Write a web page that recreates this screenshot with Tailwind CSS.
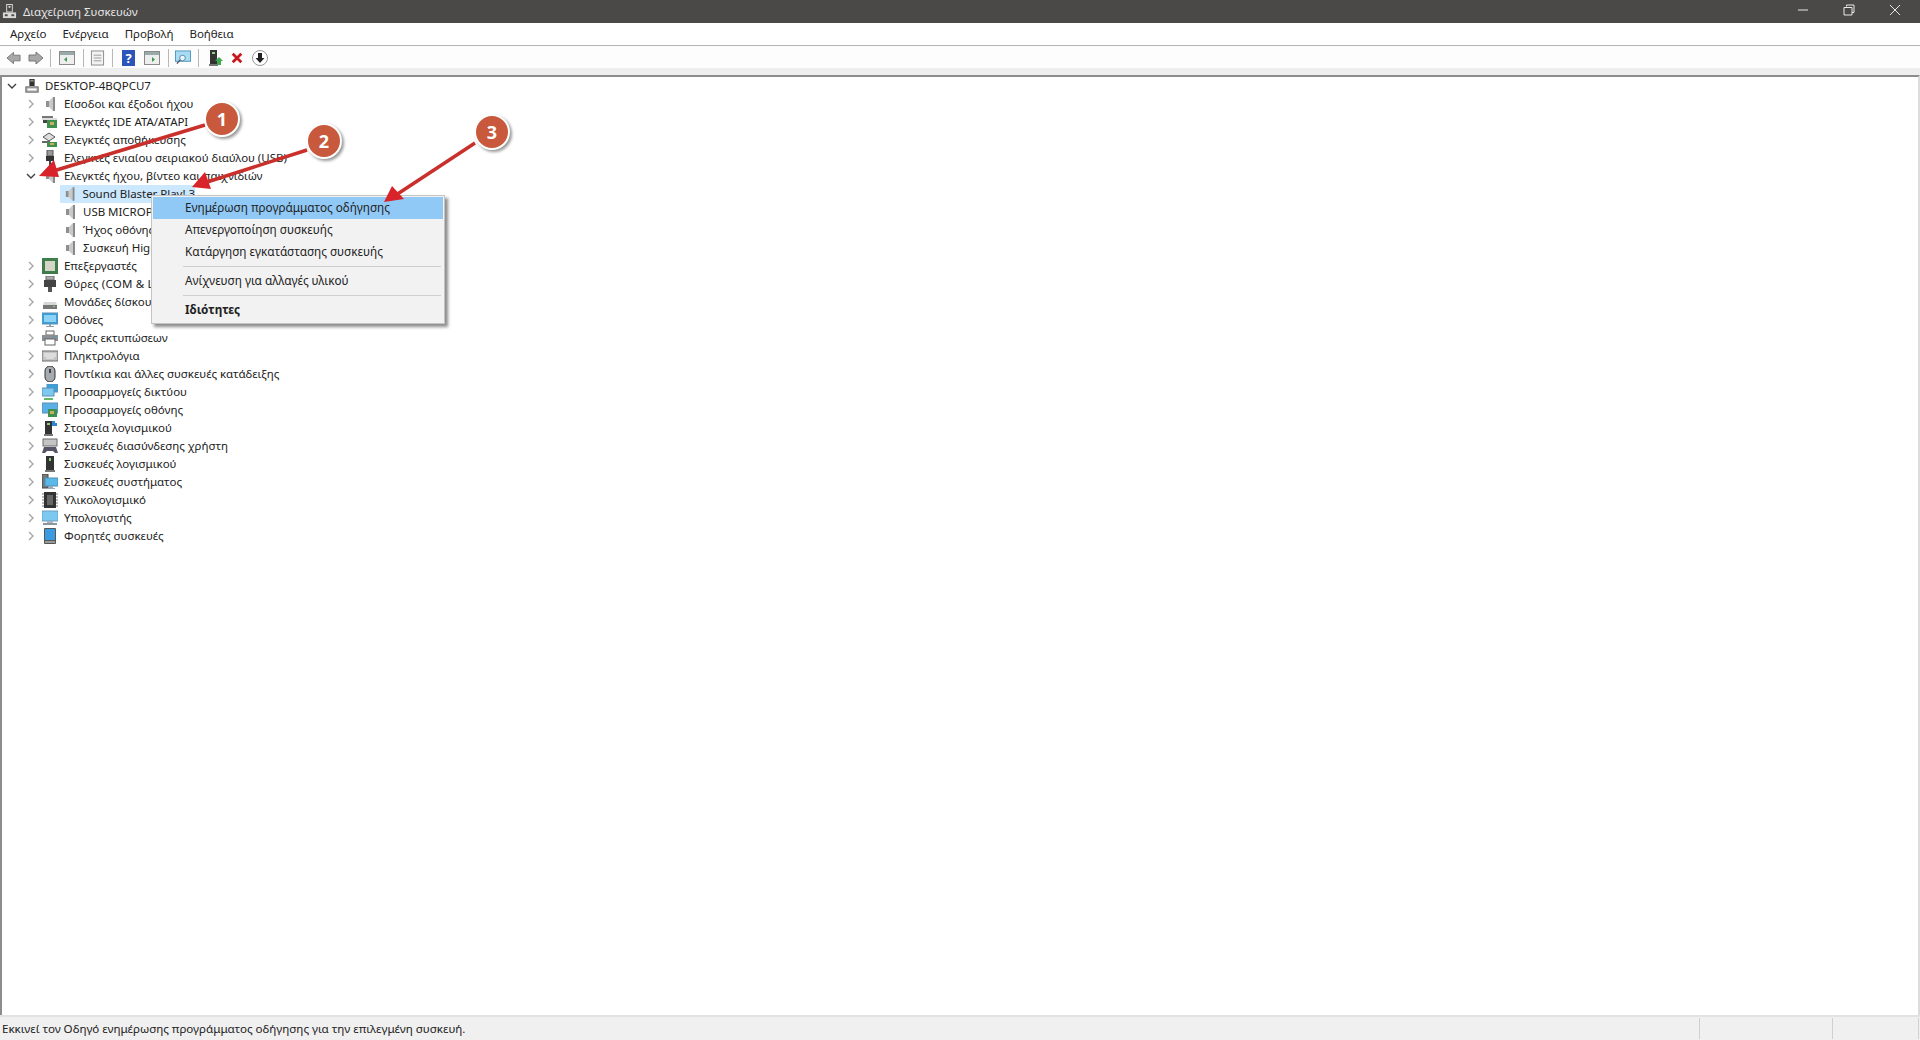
<!DOCTYPE html>
<html lang="el">
<head>
<meta charset="utf-8">
<title>Διαχείριση Συσκευών</title>
<script src="https://cdn.jsdelivr.net/npm/@tailwindcss/browser@4"></script>
</head>
<body class="overflow-hidden bg-white">
<!-- icon sprites -->
<svg class="hidden">
  <symbol id="root" viewBox="0 0 16 16"><rect x="5" y="0" width="6" height="8" fill="#333"/><rect x="6" y="1" width="4" height="2" fill="#888"/><rect x="1" y="9" width="14" height="6" fill="#b5b5b5" stroke="#555"/><rect x="3" y="11" width="10" height="2" fill="#fff"/></symbol>
  <symbol id="title-icon" viewBox="0 0 16 16"><rect x="5" y="0.500" width="6" height="8" fill="none" stroke="#ddd"/><rect x="7" y="2" width="2" height="2" fill="#ddd"/><rect x="1" y="9" width="14" height="6" fill="#d8d8d8"/><rect x="3" y="11" width="3" height="2" fill="#4a4947"/><rect x="10" y="11" width="3" height="2" fill="#4a4947"/></symbol>
  <symbol id="speaker" viewBox="0 0 16 16"><path d="M4 5h3v6H4z" fill="#8f8f8f"/><path d="M7 5l4-4v14l-4-4z" fill="#c9c9c9"/><path d="M11 1h2v14h-2z" fill="#8a8a8a"/></symbol>
  <symbol id="ide" viewBox="0 0 16 16"><rect x="0" y="2" width="11" height="3" fill="#777"/><rect x="0" y="4" width="15" height="2" fill="#ddd"/><rect x="5" y="6" width="10" height="8" fill="#3f8f4f"/><rect x="8" y="8" width="4" height="3" fill="#c8b060"/><rect x="1" y="6" width="4" height="3" fill="#444"/></symbol>
  <symbol id="storage" viewBox="0 0 16 16"><path d="M1 5l6-4 6 4-6 4z" fill="#ddd" stroke="#555"/><rect x="0" y="9" width="8" height="2" fill="#666"/><rect x="5" y="10" width="10" height="5" fill="#3f8f4f"/><rect x="8" y="11" width="4" height="2" fill="#c8b060"/></symbol>
  <symbol id="usb" viewBox="0 0 16 16"><rect x="5" y="0" width="6" height="6" fill="#999" stroke="#555"/><rect x="4" y="6" width="8" height="5" fill="#333"/><rect x="7" y="11" width="2" height="5" fill="#444"/></symbol>
  <symbol id="cpu" viewBox="0 0 16 16"><rect x="0" y="0" width="16" height="16" fill="#3f7d4a"/><rect x="3" y="3" width="10" height="10" fill="#d6d6c6"/></symbol>
  <symbol id="port" viewBox="0 0 16 16"><rect x="4" y="0" width="8" height="4" fill="#aaa" stroke="#666"/><rect x="2" y="4" width="12" height="7" fill="#444"/><rect x="6" y="11" width="4" height="5" fill="#555"/></symbol>
  <symbol id="disk" viewBox="0 0 16 16"><path d="M2 8h12l1 3H1z" fill="#d8d8d8"/><rect x="1" y="11" width="14" height="4" fill="#777"/><rect x="11" y="12" width="2" height="1" fill="#7fd06f"/></symbol>
  <symbol id="monitor" viewBox="0 0 16 16"><rect x="0" y="1" width="16" height="11" fill="#3aa0dc" stroke="#5c8fb5"/><rect x="2" y="3" width="12" height="7" fill="#8ed2f5"/><rect x="7" y="12" width="2" height="2" fill="#8aa"/><rect x="4" y="14" width="8" height="1" fill="#99a"/></symbol>
  <symbol id="printer" viewBox="0 0 16 16"><rect x="4" y="1" width="8" height="4" fill="#fff" stroke="#666"/><rect x="0" y="5" width="16" height="6" fill="#8a8f94"/><rect x="3" y="9" width="10" height="6" fill="#fff" stroke="#666"/><rect x="12" y="6" width="2" height="1" fill="#38a0dc"/></symbol>
  <symbol id="keyboard" viewBox="0 0 16 16"><rect x="0" y="3" width="16" height="10" fill="#c4c4c4" stroke="#6c6c6c"/><path d="M2 6h12M2 8h12M4 10h8" stroke="#f4f4f4"/></symbol>
  <symbol id="mouse" viewBox="0 0 16 16"><rect x="3" y="0" width="10" height="16" rx="5" fill="#a5abb0" stroke="#333"/><rect x="7" y="3" width="2" height="4" fill="#444"/></symbol>
  <symbol id="network" viewBox="0 0 16 16"><rect x="5" y="0" width="11" height="8" fill="#3aa0dc" stroke="#5c8fb5"/><rect x="0" y="4" width="12" height="8" fill="#7cc8f0" stroke="#5c8fb5"/><rect x="2" y="14" width="9" height="2" fill="#5fb86a"/></symbol>
  <symbol id="adapter" viewBox="0 0 16 16"><rect x="0" y="1" width="16" height="10" fill="#5ab0e4" stroke="#5c8fb5"/><rect x="6" y="7" width="9" height="8" fill="#3f8f4f"/><rect x="8" y="9" width="4" height="3" fill="#c8b060"/></symbol>
  <symbol id="component" viewBox="0 0 16 16"><rect x="3" y="1" width="7" height="14" fill="#333"/><rect x="5" y="3" width="3" height="2" fill="#8fd07f"/><rect x="2" y="14" width="9" height="2" fill="#777"/><path d="M10 1h3v2h2v3h-5z" fill="#2f86d0"/></symbol>
  <symbol id="hid" viewBox="0 0 16 16"><rect x="1" y="1" width="14" height="7" fill="#c4c4c4" stroke="#6c6c6c"/><path d="M2 9h12l2 6h-3l-2-2H5l-2 2H0z" fill="#556"/></symbol>
  <symbol id="software" viewBox="0 0 16 16"><rect x="4" y="0" width="8" height="14" fill="#333"/><rect x="7" y="2" width="2" height="3" fill="#8fd07f"/><rect x="3" y="14" width="10" height="2" fill="#777"/></symbol>
  <symbol id="system" viewBox="0 0 16 16"><rect x="0" y="0" width="6" height="14" fill="#777" stroke="#444"/><rect x="3" y="4" width="13" height="8" fill="#5ab8ea" stroke="#4f8fb5"/><rect x="7" y="12" width="4" height="2" fill="#9ab"/><rect x="5" y="14" width="8" height="1" fill="#9ab"/></symbol>
  <symbol id="firmware" viewBox="0 0 16 16"><rect x="2" y="0" width="12" height="16" fill="#333"/><path d="M0 2h2M0 5h2M0 8h2M0 11h2M0 14h2M14 2h2M14 5h2M14 8h2M14 11h2M14 14h2" stroke="#777"/><rect x="5" y="3" width="6" height="10" fill="#666"/></symbol>
  <symbol id="computer" viewBox="0 0 16 16"><rect x="0" y="1" width="16" height="10" fill="#7cc8f0" stroke="#6a9fc0"/><rect x="5" y="11" width="6" height="2" fill="#a8b4bc"/><rect x="1" y="13" width="14" height="2" fill="#8a959c"/></symbol>
  <symbol id="tablet" viewBox="0 0 16 16"><rect x="2" y="0" width="12" height="16" rx="1" fill="#555"/><rect x="3" y="1" width="10" height="11" fill="#3a9be0"/><rect x="3" y="13" width="10" height="2" fill="#999"/></symbol>
  <symbol id="chev-r" viewBox="0 0 10 10"><path d="M3 1l4 4-4 4" fill="none" stroke="#a6a6a6" stroke-width="1.4"/></symbol>
  <symbol id="chev-d" viewBox="0 0 10 10"><path d="M1 3l4 4 4-4" fill="none" stroke="#404040" stroke-width="1.4"/></symbol>
</svg>

<div class="relative flex flex-col h-[1040px] w-[1920px] whitespace-nowrap text-[11.5px] tracking-[-0.03px] text-[#222] font-['Noto_Sans','Open_Sans',sans-serif]">
  <!-- title bar -->
  <div class="flex items-center h-[23px] bg-[#4a4947] text-[#e6e6e6]">
    <svg class="w-[15px] h-[15px] ml-[2px] mr-[6px]"><use href="#title-icon"/></svg>
    <span>Διαχείριση Συσκευών</span>
    <div class="ml-auto flex items-center gap-[34px] mr-[19px] pb-[3px]">
      <svg class="w-[12px] h-[12px]" viewBox="0 0 12 12"><path d="M1 6h10" stroke="#e8e8e8"/></svg>
      <svg class="w-[12px] h-[12px]" viewBox="0 0 12 12"><path d="M3.500 2.500v-1.500h7.500v7.500h-2M1 3.500h8v7.500h-8z" fill="none" stroke="#e8e8e8"/></svg>
      <svg class="w-[12px] h-[12px]" viewBox="0 0 12 12"><path d="M1 1l10 10M11 1l-10 10" stroke="#e8e8e8"/></svg>
    </div>
  </div>
  <!-- menu bar -->
  <div class="flex items-center h-[22px] pl-[10px] gap-[16px] bg-white border-b border-[#b4b4b4] box-content">
    <span>Αρχείο</span><span>Ενέργεια</span><span>Προβολή</span><span>Βοήθεια</span>
  </div>
  <!-- toolbar -->
  <div class="flex items-center h-[22px] pl-[6px] pt-[2px] bg-[#fdfdfd]">
    <svg class="w-[15px] h-[14px] mr-[7px]" viewBox="0 0 16 14"><path d="M1 7l7-6v3h7v6H8v3z" fill="#a8a8a8" stroke="#777"/></svg>
    <svg class="w-[16px] h-[14px] mr-[6px]" viewBox="0 0 16 14"><path d="M15 7L8 1v3H1v6h7v3z" fill="#a8a8a8" stroke="#777"/></svg>
    <div class="w-px h-[18px] bg-[#b8b8b8] mr-[8px]"></div>
    <svg class="w-[16px] h-[14px] mr-[8px]" viewBox="0 0 16 14"><rect x=".5" y=".5" width="15" height="13" fill="#eee" stroke="#8a8a8a"/><rect x="1" y="1" width="14" height="3" fill="#9aa"/><path d="M8 6v5L5 8.500z" fill="#3d9a4f"/></svg>
    <div class="w-px h-[18px] bg-[#b8b8b8] mr-[6px]"></div>
    <svg class="w-[15px] h-[16px] mr-[7px]" viewBox="0 0 16 16"><rect x="1.500" y=".5" width="13" height="15" fill="#f2f2f2" stroke="#888"/><path d="M4 5h8M4 8h8M4 11h8" stroke="#999"/></svg>
    <div class="w-px h-[18px] bg-[#b8b8b8] mr-[9px]"></div>
    <div class="w-[13px] h-[16px] bg-[#2b55b8] text-white text-[13px] font-bold leading-[16px] text-center mr-[9px]">?</div>
    <svg class="w-[16px] h-[14px] mr-[8px]" viewBox="0 0 16 14"><rect x=".5" y=".5" width="15" height="13" fill="#eee" stroke="#8a8a8a"/><rect x="1" y="1" width="14" height="3" fill="#9aa"/><path d="M8 6v5l3-2.500z" fill="#3d9a4f"/></svg>
    <div class="w-px h-[18px] bg-[#b8b8b8] mr-[6px]"></div>
    <svg class="w-[16px] h-[16px] mr-[7px]" viewBox="0 0 17 16"><rect x=".5" y=".5" width="16" height="11" fill="#a8dcf5" stroke="#4f96bd"/><circle cx="8" cy="8" r="3" fill="#e6f6fd" stroke="#5a8aa5"/><path d="M5.500 10L2 14" stroke="#556" stroke-width="1.500"/></svg>
    <div class="w-px h-[18px] bg-[#b8b8b8] mr-[10px]"></div>
    <svg class="w-[14px] h-[16px] mr-[8px]" viewBox="0 0 14 16"><rect x="1" y="0" width="7" height="14" fill="#333"/><rect x="3" y="2" width="3" height="2" fill="#8fd07f"/><rect x="0" y="14" width="9" height="2" fill="#777"/><path d="M10 7l4 4h-2v4H8v-4H6z" fill="#3da84f"/></svg>
    <svg class="w-[12px] h-[14px] mr-[9px]" viewBox="0 0 14 14"><path d="M2 2l10 10M12 2L2 12" stroke="#c8161d" stroke-width="3.200"/></svg>
    <svg class="w-[16px] h-[16px]" viewBox="0 0 16 16"><circle cx="8" cy="8" r="7.500" fill="#fff" stroke="#999"/><path d="M6 3h4v5h2.500L8 13 3.500 8H6z" fill="#222"/></svg>
  </div>
  <div class="h-[7px] bg-[#eeeeee]"></div>

  <!-- device tree -->
  <div class="flex-1 bg-white border-t-2 border-l-2 border-[#8c8c8c] border-r-2 border-r-[#dcdcdc]">
    <div class="flex items-center h-[18px]"><svg class="w-[10px] h-[10px] ml-[5px]"><use href="#chev-d"/></svg><svg class="w-[14px] h-[14px] ml-[8px] mr-[6px]"><use href="#root"/></svg>DESKTOP-4BQPCU7</div>
    <div class="flex items-center h-[18px] pl-[24px]"><svg class="w-[10px] h-[10px]"><use href="#chev-r"/></svg><svg class="w-[16px] h-[16px] ml-[6px] mr-[6px]"><use href="#speaker"/></svg>Είσοδοι και έξοδοι ήχου</div>
    <div class="flex items-center h-[18px] pl-[24px]"><svg class="w-[10px] h-[10px]"><use href="#chev-r"/></svg><svg class="w-[16px] h-[16px] ml-[6px] mr-[6px]"><use href="#ide"/></svg>Ελεγκτές IDE ATA/ATAPI</div>
    <div class="flex items-center h-[18px] pl-[24px]"><svg class="w-[10px] h-[10px]"><use href="#chev-r"/></svg><svg class="w-[16px] h-[16px] ml-[6px] mr-[6px]"><use href="#storage"/></svg>Ελεγκτές αποθήκευσης</div>
    <div class="flex items-center h-[18px] pl-[24px]"><svg class="w-[10px] h-[10px]"><use href="#chev-r"/></svg><svg class="w-[16px] h-[16px] ml-[6px] mr-[6px]"><use href="#usb"/></svg>Ελεγκτές ενιαίου σειριακού διαύλου (USB)</div>
    <div class="flex items-center h-[18px] pl-[24px]"><svg class="w-[10px] h-[10px]"><use href="#chev-d"/></svg><svg class="w-[16px] h-[16px] ml-[6px] mr-[6px]"><use href="#speaker"/></svg>Ελεγκτές ήχου, βίντεο και παιχνιδιών</div>
    <div class="flex items-center h-[18px] pl-[58px]"><div class="flex items-center h-full w-[135px] bg-[#cce8ff]"><svg class="w-[16px] h-[16px] ml-[2px] mr-[5px]"><use href="#speaker"/></svg>Sound Blaster Play! 3</div></div>
    <div class="flex items-center h-[18px] pl-[58px]"><svg class="w-[16px] h-[16px] ml-[2px] mr-[5px]"><use href="#speaker"/></svg>USB MICROPHONE</div>
    <div class="flex items-center h-[18px] pl-[58px]"><svg class="w-[16px] h-[16px] ml-[2px] mr-[5px]"><use href="#speaker"/></svg>Ήχος οθόνης Intel</div>
    <div class="flex items-center h-[18px] pl-[58px]"><svg class="w-[16px] h-[16px] ml-[2px] mr-[5px]"><use href="#speaker"/></svg>Συσκευή High Definition Audio</div>
    <div class="flex items-center h-[18px] pl-[24px]"><svg class="w-[10px] h-[10px]"><use href="#chev-r"/></svg><svg class="w-[16px] h-[16px] ml-[6px] mr-[6px]"><use href="#cpu"/></svg>Επεξεργαστές</div>
    <div class="flex items-center h-[18px] pl-[24px] tracking-[0.2px]"><svg class="w-[10px] h-[10px]"><use href="#chev-r"/></svg><svg class="w-[16px] h-[16px] ml-[6px] mr-[6px]"><use href="#port"/></svg>Θύρες (COM &amp; LPT)</div>
    <div class="flex items-center h-[18px] pl-[24px]"><svg class="w-[10px] h-[10px]"><use href="#chev-r"/></svg><svg class="w-[16px] h-[16px] ml-[6px] mr-[6px]"><use href="#disk"/></svg>Μονάδες δίσκου</div>
    <div class="flex items-center h-[18px] pl-[24px]"><svg class="w-[10px] h-[10px]"><use href="#chev-r"/></svg><svg class="w-[16px] h-[16px] ml-[6px] mr-[6px]"><use href="#monitor"/></svg>Οθόνες</div>
    <div class="flex items-center h-[18px] pl-[24px]"><svg class="w-[10px] h-[10px]"><use href="#chev-r"/></svg><svg class="w-[16px] h-[16px] ml-[6px] mr-[6px]"><use href="#printer"/></svg>Ουρές εκτυπώσεων</div>
    <div class="flex items-center h-[18px] pl-[24px]"><svg class="w-[10px] h-[10px]"><use href="#chev-r"/></svg><svg class="w-[16px] h-[16px] ml-[6px] mr-[6px]"><use href="#keyboard"/></svg>Πληκτρολόγια</div>
    <div class="flex items-center h-[18px] pl-[24px]"><svg class="w-[10px] h-[10px]"><use href="#chev-r"/></svg><svg class="w-[16px] h-[16px] ml-[6px] mr-[6px]"><use href="#mouse"/></svg>Ποντίκια και άλλες συσκευές κατάδειξης</div>
    <div class="flex items-center h-[18px] pl-[24px]"><svg class="w-[10px] h-[10px]"><use href="#chev-r"/></svg><svg class="w-[16px] h-[16px] ml-[6px] mr-[6px]"><use href="#network"/></svg>Προσαρμογείς δικτύου</div>
    <div class="flex items-center h-[18px] pl-[24px]"><svg class="w-[10px] h-[10px]"><use href="#chev-r"/></svg><svg class="w-[16px] h-[16px] ml-[6px] mr-[6px]"><use href="#adapter"/></svg>Προσαρμογείς οθόνης</div>
    <div class="flex items-center h-[18px] pl-[24px]"><svg class="w-[10px] h-[10px]"><use href="#chev-r"/></svg><svg class="w-[16px] h-[16px] ml-[6px] mr-[6px]"><use href="#component"/></svg>Στοιχεία λογισμικού</div>
    <div class="flex items-center h-[18px] pl-[24px]"><svg class="w-[10px] h-[10px]"><use href="#chev-r"/></svg><svg class="w-[16px] h-[16px] ml-[6px] mr-[6px]"><use href="#hid"/></svg>Συσκευές διασύνδεσης χρήστη</div>
    <div class="flex items-center h-[18px] pl-[24px]"><svg class="w-[10px] h-[10px]"><use href="#chev-r"/></svg><svg class="w-[16px] h-[16px] ml-[6px] mr-[6px]"><use href="#software"/></svg>Συσκευές λογισμικού</div>
    <div class="flex items-center h-[18px] pl-[24px]"><svg class="w-[10px] h-[10px]"><use href="#chev-r"/></svg><svg class="w-[16px] h-[16px] ml-[6px] mr-[6px]"><use href="#system"/></svg>Συσκευές συστήματος</div>
    <div class="flex items-center h-[18px] pl-[24px]"><svg class="w-[10px] h-[10px]"><use href="#chev-r"/></svg><svg class="w-[16px] h-[16px] ml-[6px] mr-[6px]"><use href="#firmware"/></svg>Υλικολογισμικό</div>
    <div class="flex items-center h-[18px] pl-[24px]"><svg class="w-[10px] h-[10px]"><use href="#chev-r"/></svg><svg class="w-[16px] h-[16px] ml-[6px] mr-[6px]"><use href="#computer"/></svg>Υπολογιστής</div>
    <div class="flex items-center h-[18px] pl-[24px]"><svg class="w-[10px] h-[10px]"><use href="#chev-r"/></svg><svg class="w-[16px] h-[16px] ml-[6px] mr-[6px]"><use href="#tablet"/></svg>Φορητές συσκευές</div>
  </div>

  <!-- status bar -->
  <div class="flex h-[23px] border-t-2 border-[#e2e2e2] bg-[#f0f0f0] box-content text-[11.6px]">
    <div class="flex items-center flex-1 pl-[2px]">Εκκινεί τον Οδηγό ενημέρωσης προγράμματος οδήγησης για την επιλεγμένη συσκευή.</div>
    <div class="w-[133px] border-l border-[#d0d0d0] my-[1px]"></div>
    <div class="w-[86px] border-l border-[#d0d0d0] my-[1px]"></div>
    <div class="w-[2px] border-l border-[#d0d0d0] my-[1px]"></div>
  </div>

  <!-- context menu -->
  <div class="absolute left-[151px] top-[195px] w-[294px] h-[129px] bg-[#f2f2f2] border border-[#c4c4c4] p-[1px] text-[11.75px] shadow-[3px_3px_3px_rgba(0,0,0,0.45)]">
    <div class="flex items-center h-[22px] pl-[32px] bg-[#90c8f6]">Ενημέρωση προγράμματος οδήγησης</div>
    <div class="flex items-center h-[22px] pl-[32px]">Απενεργοποίηση συσκευής</div>
    <div class="flex items-center h-[22px] pl-[32px]">Κατάργηση εγκατάστασης συσκευής</div>
    <div class="h-px my-[3px] ml-[30px] mr-[2px] bg-[#cfcfcf]"></div>
    <div class="flex items-center h-[22px] pl-[32px]">Ανίχνευση για αλλαγές υλικού</div>
    <div class="h-px my-[3px] ml-[30px] mr-[2px] bg-[#cfcfcf]"></div>
    <div class="flex items-center h-[22px] pl-[32px] font-bold">Ιδιότητες</div>
  </div>

  <!-- red arrows -->
  <svg class="absolute left-0 top-0 w-[600px] h-[300px] pointer-events-none" viewBox="0 0 600 300">
    <g fill="#d9232a">
      <path d="M205 125L50 172" stroke-width="3.500" stroke="#c9302c"/><path d="M39 176L54 160L59 177z"/>
      <path d="M307 150L204 183" stroke-width="3.500" stroke="#c9302c"/><path d="M192 187L205 172L211 189z"/>
      <path d="M475 143L396 195" stroke-width="3.500" stroke="#c9302c"/><path d="M384 202L392 186L404 199z"/>
    </g>
  </svg>
  <!-- numbered badges -->
  <div class="absolute left-[204px] top-[101px] w-[36px] h-[36px] flex items-center justify-center rounded-full bg-[#c8593c] border-2 border-white shadow-[2px_2px_3px_rgba(0,0,0,0.4)] text-white text-[18px] font-bold">1</div>
  <div class="absolute left-[306px] top-[123px] w-[36px] h-[36px] flex items-center justify-center rounded-full bg-[#c8593c] border-2 border-white shadow-[2px_2px_3px_rgba(0,0,0,0.4)] text-white text-[18px] font-bold">2</div>
  <div class="absolute left-[474px] top-[114px] w-[36px] h-[36px] flex items-center justify-center rounded-full bg-[#c8593c] border-2 border-white shadow-[2px_2px_3px_rgba(0,0,0,0.4)] text-white text-[18px] font-bold">3</div>
</div>
</body>
</html>
